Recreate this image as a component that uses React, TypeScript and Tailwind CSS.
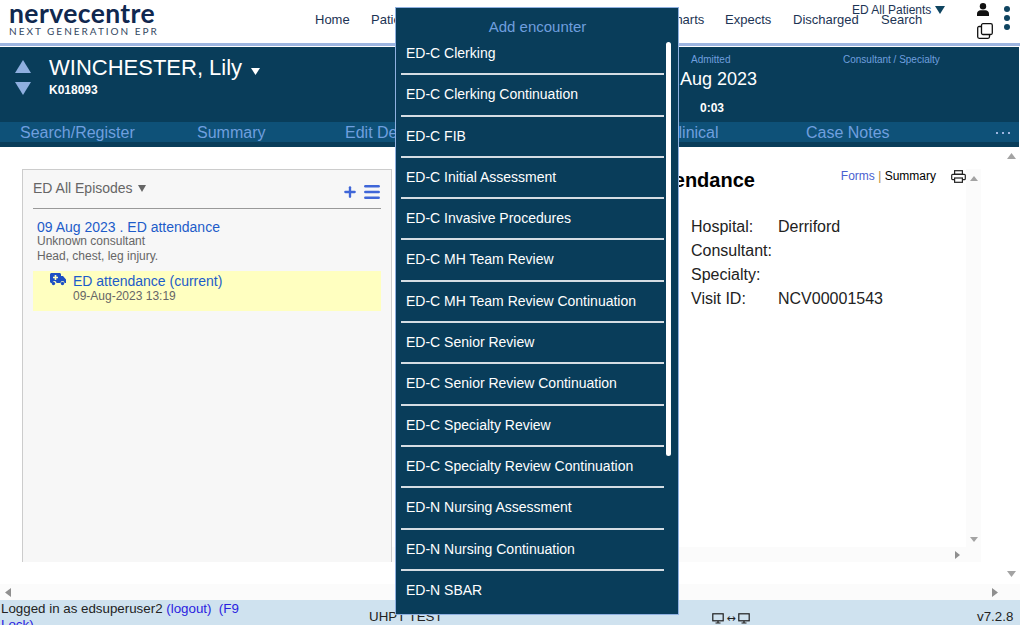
import React from 'react';
import { Plus, Menu } from 'lucide-react';

const navLinks = [
  { label: 'Home', width: 'w-[56px]' },
  { label: 'Patients', width: 'w-[100px]' },
  { label: 'Beds', width: 'w-[100px]' },
  { label: 'Tasks', width: 'w-[95px]' },
  { label: 'Charts', width: 'w-[59px]' },
  { label: 'Expects', width: 'w-[68px]' },
  { label: 'Discharged', width: 'w-[88px]' },
  { label: 'Search', width: 'w-[60px]' },
];

const encounters = [
  'ED-C Clerking',
  'ED-C Clerking Continuation',
  'ED-C FIB',
  'ED-C Initial Assessment',
  'ED-C Invasive Procedures',
  'ED-C MH Team Review',
  'ED-C MH Team Review Continuation',
  'ED-C Senior Review',
  'ED-C Senior Review Continuation',
  'ED-C Specialty Review',
  'ED-C Specialty Review Continuation',
  'ED-N Nursing Assessment',
  'ED-N Nursing Continuation',
  'ED-N SBAR',
];

const details = [
  { label: 'Hospital:', value: 'Derriford' },
  { label: 'Consultant:', value: '' },
  { label: 'Specialty:', value: '' },
  { label: 'Visit ID:', value: 'NCV00001543' },
];

const Arrow = ({ dir, className }: { dir: 'up' | 'down' | 'left' | 'right'; className: string }) => {
  const points = {
    up: '5,0 10,8 0,8',
    down: '0,0 10,0 5,8',
    left: '8,0 8,10 0,5',
    right: '0,0 8,5 0,10',
  }[dir];
  return (
    <svg viewBox={dir === 'up' || dir === 'down' ? '0 0 10 8' : '0 0 8 10'} className={className} fill="currentColor" preserveAspectRatio="none">
      <polygon points={points} />
    </svg>
  );
};

const Monitor = () => (
  <svg viewBox="0 0 12 11" className="w-[12px] h-[11px]" fill="none" stroke="#1f1f1f" strokeWidth="1.2">
    <rect x="0.8" y="0.8" width="10.4" height="7" />
    <path d="M3.5 10h5M6 8v2" />
  </svg>
);

const Ambulance = () => (
  <svg viewBox="0 0 16 13" className="w-[16px] h-[13px]" fill="#1d4fc4">
    <path d="M0 1.500C0 .7.700 0 1.500 0h8C10.300 0 11 .7 11 1.500V3h2l3 3.500V10h-1.500a2 2 0 0 0-4 0h-4a2 2 0 0 0-4 0H1.500C.7 10 0 9.300 0 8.500z" />
    <circle cx="3.500" cy="10.500" r="1.700" />
    <circle cx="12.500" cy="10.500" r="1.700" />
    <path d="M4.700 2h1.600v1.700H8v1.600H6.300V7H4.700V5.300H3V3.700h1.700z" fill="#ffffc0" />
  </svg>
);

const PersonIcon = () => (
  <svg viewBox="0 0 12 13" className="w-[12px] h-[13px]" fill="#111">
    <circle cx="6" cy="3.200" r="3.200" />
    <path d="M0 13v-2.500C0 8.500 1.800 7.200 3.500 7.200h5C10.200 7.200 12 8.500 12 10.500V13z" />
  </svg>
);

const WindowsIcon = () => (
  <svg viewBox="0 0 16 16" className="w-[16px] h-[16px]" fill="none" stroke="#111" strokeWidth="1.300">
    <rect x="4.500" y="0.700" width="10.800" height="10.800" rx="1.500" />
    <path d="M4.500 3.500H2.200C1.300 3.500.7 4.100.7 5v8.800c0 .9.600 1.500 1.500 1.500H11c.9 0 1.500-.6 1.500-1.500v-2.300" />
  </svg>
);

const PrinterIcon = () => (
  <svg viewBox="0 0 15 13" className="w-[15px] h-[13px]" fill="none" stroke="#222" strokeWidth="1.200">
    <rect x="3.600" y="0.700" width="7.800" height="3.600" />
    <rect x="0.700" y="4.300" width="13.600" height="5.400" rx="1" />
    <rect x="3.600" y="8" width="7.800" height="4.300" fill="#fff" />
  </svg>
);

const App: React.FC = () => {
  return (
    <div className="relative w-[1020px] h-[625px] overflow-hidden bg-white flex flex-col font-['Liberation_Sans',Arial,sans-serif]">
      {/* top nav */}
      <header className="relative h-[43px] shrink-0 flex items-start">
        <div className="w-[315px] shrink-0 pl-[9px]">
          <div className="font-['Lato',sans-serif] font-bold text-[26.5px] leading-[26px] tracking-[0.4px] text-[#10284f]">nervecentre</div>
          <div className="font-['Lato',sans-serif] text-[10px] leading-[10px] tracking-[2px] text-[#33475f]">NEXT GENERATION EPR</div>
        </div>
        <nav className="flex pt-[12px] text-[13px] leading-[16px] text-[#1c3454]">
          {navLinks.map((link) => (
            <a key={link.label} className={`${link.width} whitespace-nowrap`}>{link.label}</a>
          ))}
        </nav>
        <div className="absolute left-[852px] top-[2px] flex items-center text-[12px] leading-[16px] text-[#1c3454]">
          ED All Patients
          <Arrow dir="down" className="w-[10px] h-[8px] ml-[4px] text-[#0f4460]" />
        </div>
        <div className="absolute left-[977px] top-[3px] flex flex-col items-start gap-[7px]">
          <PersonIcon />
          <WindowsIcon />
        </div>
        <div className="absolute left-[1004px] top-[6px] flex flex-col gap-[3px]">
          <span className="w-[6px] h-[6px] rounded-full bg-[#0f4460]" />
          <span className="w-[6px] h-[6px] rounded-full bg-[#0f4460]" />
          <span className="w-[6px] h-[6px] rounded-full bg-[#0f4460]" />
        </div>
      </header>
      <div className="h-[3px] shrink-0 bg-[#9db5e0]" />
      <div className="h-px shrink-0" />

      {/* patient banner */}
      <section className="h-[75px] shrink-0 bg-[#093d5a] mr-[1px] flex">
        <div className="w-[49px] shrink-0 pl-[15px] pt-[13px] flex flex-col gap-[9px] text-[#8fafe0]">
          <Arrow dir="up" className="w-[16px] h-[13px]" />
          <Arrow dir="down" className="w-[16px] h-[13px]" />
        </div>
        <div className="w-[631px] shrink-0 text-white">
          <div className="flex items-center pt-[7px] text-[22px] leading-[28px]">
            WINCHESTER, Lily
            <Arrow dir="down" className="w-[9px] h-[7px] ml-[9px] mt-[7px]" />
          </div>
          <div className="text-[12px] font-bold leading-[14px] mt-[1px]">K018093</div>
        </div>
        <div className="w-[163px] shrink-0 relative text-white">
          <div className="pl-[11px] pt-[7px] text-[10px] leading-[12px] text-[#6f9fdf]">Admitted</div>
          <div className="text-[18px] leading-[22px] mt-[2px]">Aug 2023</div>
          <div className="pl-[20px] mt-[11px] text-[12px] font-bold leading-[14px]">0:03</div>
        </div>
        <div className="pt-[7px] text-[10px] leading-[12px] text-[#6f9fdf]">Consultant / Specialty</div>
      </section>

      {/* tabs */}
      <nav className="h-[25px] shrink-0 bg-[#093d5a] mr-[1px]">
        <div className="h-[20px] bg-[#0e5178] flex text-[16px] leading-[21px] text-[#6f9fdf] pl-[20px] relative">
          <span className="w-[177px]">Search/Register</span>
          <span className="w-[148px]">Summary</span>
          <span className="w-[322px]">Edit Details</span>
          <span className="w-[139px] whitespace-nowrap">Clinical</span>
          <span>Case Notes</span>
          <div className="absolute left-[996px] top-[10px] flex gap-[4px]">
            <span className="w-[2px] h-[2px] bg-[#9db5e0]" />
            <span className="w-[2px] h-[2px] bg-[#9db5e0]" />
            <span className="w-[2px] h-[2px] bg-[#9db5e0]" />
          </div>
        </div>
      </nav>

      {/* main area */}
      <div className="flex-1 flex flex-col min-h-0">
        <div className="flex-1 flex min-h-0">
          <div className="flex-1 flex pl-[22px] pt-[22px] min-w-0">
            <aside className="w-[370px] h-[393px] shrink-0 bg-[#f7f7f7] border border-[#ccc] border-b-0 pl-[10px] pr-[10px]">
              <div className="h-[39px] border-b border-[#999] flex items-start justify-between">
                <div className="flex items-center pt-[9px] text-[14px] leading-[18px] text-[#666]">
                  ED All Episodes
                  <Arrow dir="down" className="w-[8px] h-[7px] ml-[5px]" />
                </div>
                <div className="flex items-center pt-[12px] text-[#3f66d8]">
                  <Plus size={16} strokeWidth={3.5} />
                  <Menu size={20} strokeWidth={3} className="ml-[4px] mr-[-1px]" />
                </div>
              </div>
              <div className="pl-[4px] pt-[10px]">
                <div className="text-[14px] leading-[16px] text-[#1d5cc9]">09 Aug 2023 . ED attendance</div>
                <div className="text-[12px] leading-[14px] text-[#666] mt-[-1px]">Unknown consultant</div>
                <div className="text-[12px] leading-[14px] text-[#666] mt-[1px]">Head, chest, leg injury.</div>
              </div>
              <div className="h-[40px] bg-[#ffffc0] mt-[8px] flex pl-[17px] pt-[1px]">
                <div className="pt-[1px]"><Ambulance /></div>
                <div className="pl-[7px]">
                  <div className="text-[14px] leading-[18px] text-[#1d5cc9]">ED attendance (current)</div>
                  <div className="text-[12px] leading-[12px] text-[#666]">09-Aug-2023 13:19</div>
                </div>
              </div>
            </aside>

            <div className="w-[589px] shrink-0 flex flex-col h-[393px]">
              <div className="flex-1 flex min-h-0">
                <div className="flex-1 pl-[299px] min-w-0 relative overflow-hidden">
                  <div className="absolute left-[224px] top-[-1px] text-[20px] leading-[24px] font-bold text-black whitespace-nowrap">ED attendance</div>
                  <div className="absolute right-[30px] top-[0px] text-[12px] leading-[14px] whitespace-nowrap">
                    <span className="text-[#4a5fd0]">Forms</span>
                    <span className="text-[#b08a3c]"> | </span>
                    <span className="text-black">Summary</span>
                  </div>
                  <div className="absolute right-[0px] top-[1px]"><PrinterIcon /></div>
                  <div className="pt-[46px] text-[16px] leading-[24px] text-[#222]">
                    {details.map((d) => (
                      <div key={d.label} className="flex whitespace-nowrap">
                        <span className="w-[87px] shrink-0">{d.label}</span>
                        <span>{d.value}</span>
                      </div>
                    ))}
                  </div>
                </div>
                <div className="w-[15px] shrink-0 bg-[#fbfbfb] flex flex-col justify-between items-center pt-[7px] pb-[5px] text-[#a3a3a3]">
                  <Arrow dir="up" className="w-[8px] h-[5px]" />
                  <Arrow dir="down" className="w-[8px] h-[5px]" />
                </div>
              </div>
              <div className="h-[15px] bg-[#fbfbfb] shrink-0 flex items-center justify-end pr-[21px] text-[#8f8f8f]">
                <Arrow dir="right" className="w-[5px] h-[8px]" />
              </div>
            </div>
          </div>
          <div className="w-[18px] shrink-0 pt-[6px] pb-[7px] flex flex-col justify-between items-center text-[#a3a3a3]">
            <Arrow dir="up" className="w-[9px] h-[6px]" />
            <Arrow dir="down" className="w-[9px] h-[6px]" />
          </div>
        </div>
        <div className="h-[16px] shrink-0 bg-[#fbfbfb] flex items-center justify-between pl-[5px] pr-[22px] text-[#8f8f8f]">
          <Arrow dir="left" className="w-[6px] h-[9px]" />
          <Arrow dir="right" className="w-[6px] h-[9px]" />
        </div>
      </div>

      {/* footer */}
      <footer className="h-[25px] shrink-0 bg-[#cfe2ef] overflow-hidden flex text-[13.33px] leading-[16px] text-[#222]">
        <div className="w-[369px] shrink-0 pl-[1px] pt-[1px]">
          <div className="w-[240px]">
            Logged in as edsuperuser2 <span className="text-[#2a1ee0]">(logout)</span>{' '}
            <span className="text-[#2a1ee0]">&nbsp;(F9 Lock)</span>
          </div>
        </div>
        <div className="w-[343px] shrink-0 pt-[9px]">UHPT TEST</div>
        <div className="w-[265px] shrink-0 pt-[13px] flex items-start text-[11px] leading-[11px] font-['DejaVu_Sans',sans-serif]">
          <Monitor />
          <span className="w-[14px] text-center">↔</span>
          <Monitor />
        </div>
        <div className="pt-[9px]">v7.2.8</div>
      </footer>

      {/* add encounter popup */}
      <div className="absolute left-[395px] top-[7px] w-[284px] h-[608px] bg-[#093d5a] border border-[#8fb0e0] pl-[5px]">
        <div className="text-center text-[15px] leading-[18px] pt-[10px] text-[#6f9fdf] pr-[4px]">Add encounter</div>
        <ul className="mt-[-2px] w-[263px]">
          {encounters.map((name, i) => (
            <li
              key={name}
              className={`h-[41.3px] pl-[5px] pt-[11px] text-[14px] leading-[17px] text-white ${i < encounters.length - 1 ? 'border-b-2 border-[#d5dde3]' : ''}`}
            >
              {name}
            </li>
          ))}
        </ul>
        <div className="absolute left-[270px] top-[34px] w-[5px] h-[414px] rounded-full bg-white" />
      </div>
    </div>
  );
};

export default App;
